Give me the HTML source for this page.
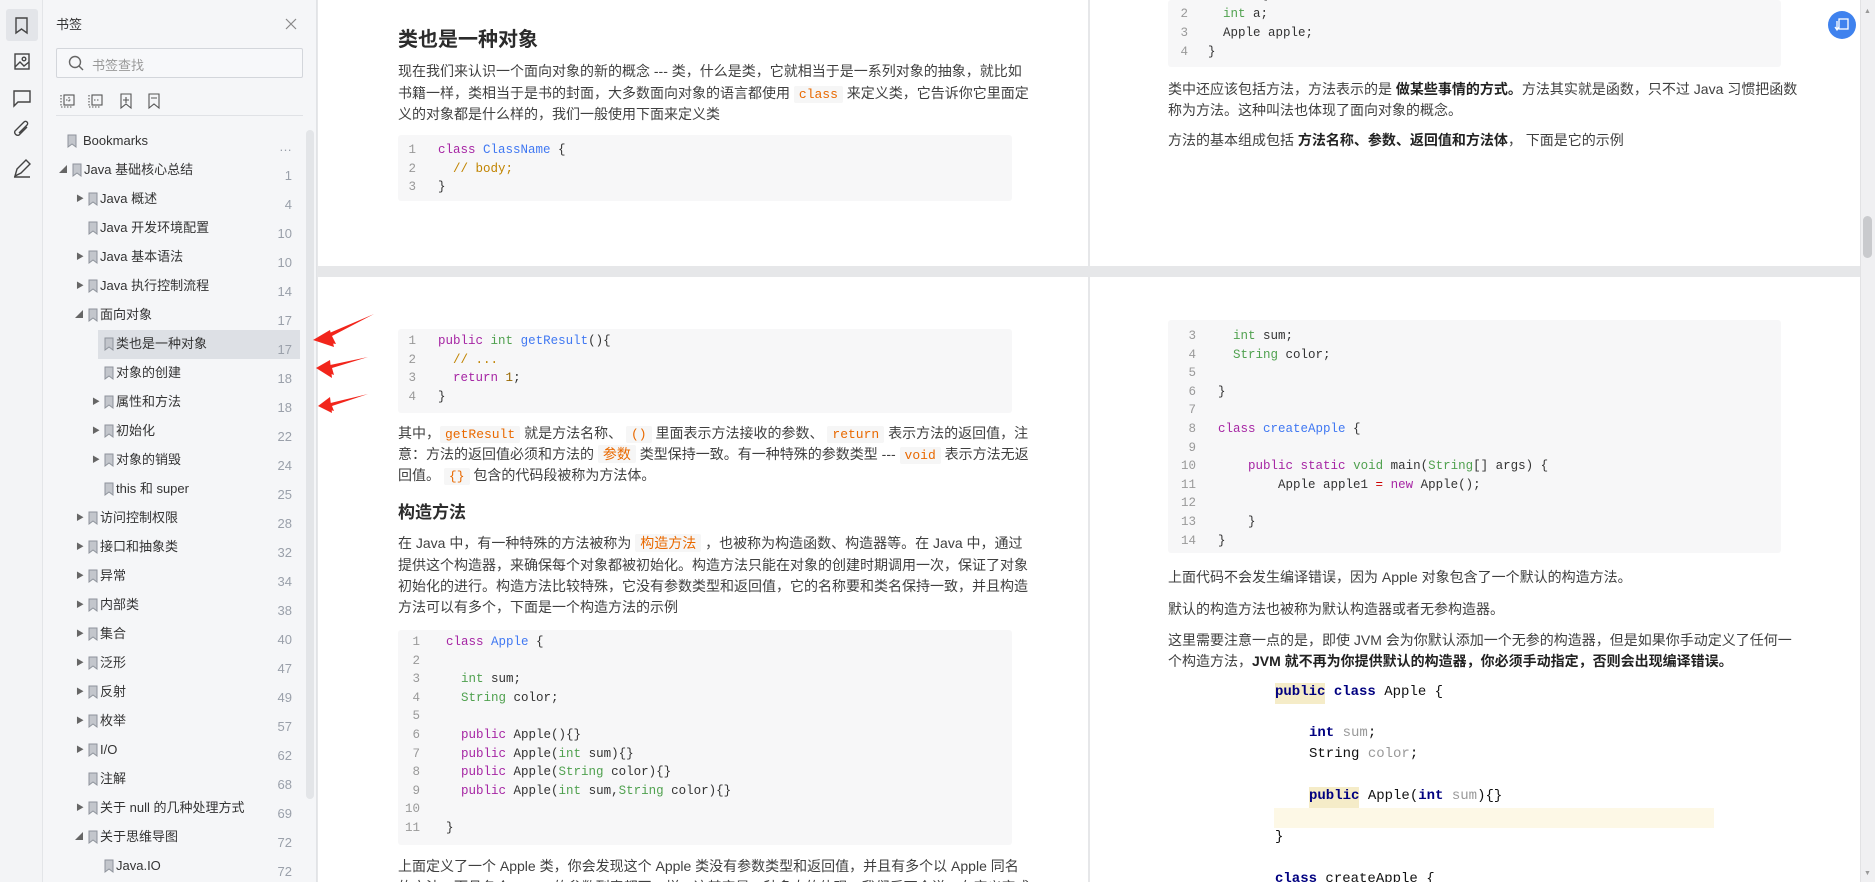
<!DOCTYPE html>
<html style="overflow:hidden"><head><meta charset="utf-8">
<style>
*{margin:0;padding:0;box-sizing:border-box}
html,body{overflow:hidden}
body{width:1875px;height:882px;position:relative;background:#e6e7e9;font-family:"Liberation Sans","Noto Sans CJK SC",sans-serif;color:#333}
.a{position:absolute;white-space:nowrap}
#icons{left:0;top:0;width:43px;height:882px;background:#f3f4f6;border-right:1px solid #e3e5e8}
#panel{left:43px;top:0;width:274px;height:882px;background:#f5f6f8;border-right:1px solid #e1e3e6}
.row{position:absolute;font-size:13px;color:#333;height:29px;line-height:24px}
.num{position:absolute;left:250px;width:42px;text-align:right;font-size:13px;color:#9aa0aa}
.tri{position:absolute;font-size:8px;color:#666}
.bm{position:absolute}
.page{position:absolute;background:#fff}
.p{position:absolute;font-size:14px;color:#3f3f3f;line-height:21px;white-space:nowrap}
.code{position:absolute;background:#f7f7f8;border-radius:3px}
.cl{position:absolute;font-family:"Liberation Mono",monospace;font-size:12.5px;white-space:pre;color:#333}
.ln{position:absolute;font-family:"Liberation Mono",monospace;font-size:12.5px;color:#999;text-align:right;width:16px}
.k{color:#a626a4}.t{color:#50a14f}.f{color:#4078f2}.c{color:#c18401}.n{color:#986801}
.ic{background:#f6f6f6;color:#e96900;font-family:"Liberation Mono",monospace;font-size:13px;padding:1px 5px;border-radius:2px}
.ict{background:#f6f6f6;color:#e96900;padding:1px 5px;border-radius:2px}
b{color:#222}
.ij{position:absolute;font-family:"Liberation Mono",monospace;font-size:14px;white-space:pre;color:#111}
.ij .kw{color:#000080;font-weight:bold}.ij .g{color:#999;}
</style></head><body>

<div class="a" id="icons"></div>
<div class="a" style="left:6px;top:9px;width:32px;height:32px;background:#e3e5e9;border-radius:3px"></div>
<svg class="a" style="left:0;top:0" width="43" height="190" fill="none" stroke="#444" stroke-width="1.4">
<path d="M16 18h11v15l-5.5-4-5.5 4z"/>
<rect x="15" y="54" width="14" height="15"/><circle cx="24" cy="59" r="1.8"/><path d="M15 67l5-5 4 4 5-4"/>
<path d="M14 91h16v11h-12l-4 4z"/>
<path d="M27 127l-8 8a3 3 0 0 1-4-4l9-9a2 2 0 0 1 3 3l-8 8"/>
<path d="M15 176l2-7 9-9 4 4-9 9z M14 177h16"/>
</svg>

<div class="a" id="panel"></div>
<div class="a" style="left:56px;top:14px;font-size:13px;color:#333">书签</div>
<svg class="a" style="left:285px;top:18px" width="12" height="12" stroke="#888" stroke-width="1.2"><path d="M1 1l10 10M11 1L1 11"/></svg>
<div class="a" style="left:56px;top:48px;width:247px;height:30px;border:1px solid #d3d6db;background:#f7f8fa;border-radius:2px"></div>
<svg class="a" style="left:68px;top:55px" width="16" height="16" fill="none" stroke="#666" stroke-width="1.4"><circle cx="7" cy="7" r="5.5"/><path d="M11 11l4 4"/></svg>
<div class="a" style="left:92px;top:55px;font-size:13px;color:#999">书签查找</div>
<svg class="a" style="left:60px;top:92px" width="110" height="18" fill="none" stroke="#555" stroke-width="1.1">
<rect x="4" y="3" width="10" height="10"/><path d="M9 5v6M6 8h6M1 3v12h12" stroke-dasharray="1.5 1.5"/>
<rect x="32" y="3" width="10" height="10"/><path d="M34 8h6M29 3v12h12" stroke-dasharray="1.5 1.5"/>
<path d="M61 2h10v14l-5-4-5 4z M66 5v6M63 8h6"/>
<path d="M89 2h10v14l-5-4-5 4z M91 6h6"/>
</svg>
<div class="a" style="left:56px;top:115px;width:247px;height:1px;background:#e0e2e6"></div>
<div class="a" style="left:306px;top:130px;width:8px;height:669px;background:#e3e5e8;border-radius:4px"></div>
<div class="a" style="left:98px;top:330px;width:202px;height:29px;background:#dde0e5"></div>

<div id="tree"></div>
<script>
var rows=[
[0,0,"Bookmarks","…",141],
[1,1,"Java 基础核心总结","1",170],
[2,2,"Java 概述","4",199],
[2,0,"Java 开发环境配置","10",228],
[2,2,"Java 基本语法","10",257],
[2,2,"Java 执行控制流程","14",286],
[2,1,"面向对象","17",315],
[3,0,"类也是一种对象","17",344],
[3,0,"对象的创建","18",373],
[3,2,"属性和方法","18",402],
[3,2,"初始化","22",431],
[3,2,"对象的销毁","24",460],
[3,0,"this 和 super","25",489],
[2,2,"访问控制权限","28",518],
[2,2,"接口和抽象类","32",547],
[2,2,"异常","34",576],
[2,2,"内部类","38",605],
[2,2,"集合","40",634],
[2,2,"泛形","47",663],
[2,2,"反射","49",692],
[2,2,"枚举","57",721],
[2,2,"I/O","62",750],
[2,0,"注解","68",779],
[2,2,"关于 null 的几种处理方式","69",808],
[2,1,"关于思维导图","72",837],
[3,0,"Java.IO","72",866]];
var h="";
rows.forEach(function(r){
 var lv=r[0],x=[0,56,72,88,104][lv];var y=r[4];
 var tx=x+3,ix=x+16,txt=x+28;
 if(lv==0){ix=67;txt=83;}
 if(r[1]==1)h+='<div class="tri" style="left:'+(tx)+'px;top:'+(y-6)+'px">◢</div>';
 if(r[1]==2)h+='<div class="tri" style="left:'+(tx+1)+'px;top:'+(y-6)+'px">▶</div>';
 h+='<svg class="bm" style="left:'+ix+'px;top:'+(y-7)+'px" width="10" height="14"><path d="M1 1h8v12l-4-3-4 3z" fill="#c3c6cc" stroke="#8e939b" stroke-width="1"/></svg>';
 h+='<div class="row" style="left:'+txt+'px;top:'+(y-12)+'px">'+r[2]+'</div>';
 h+='<div class="num" style="top:'+(y-2)+'px">'+r[3]+'</div>';
});
document.getElementById("tree").innerHTML=h;
</script>

<div class="page" style="left:318px;top:0;width:770px;height:266px"></div>
<div class="page" style="left:1090px;top:0;width:770px;height:266px"></div>
<div class="page" style="left:318px;top:277px;width:770px;height:605px"></div>
<div class="page" style="left:1090px;top:277px;width:770px;height:605px"></div>

<div class="a" style="left:398px;top:23px;font-size:20px;font-weight:bold;color:#2c2c2c">类也是一种对象</div>
<div class="p" style="left:398px;top:61px">现在我们来认识一个面向对象的新的概念 --- 类，什么是类，它就相当于是一系列对象的抽象，就比如</div>
<div class="p" style="left:398px;top:83px">书籍一样，类相当于是书的封面，大多数面向对象的语言都使用 <span class="ic">class</span> 来定义类，它告诉你它里面定</div>
<div class="p" style="left:398px;top:104px">义的对象都是什么样的，我们一般使用下面来定义类</div>
<div class="code" style="left:398px;top:135px;width:614px;height:66px"></div>
<div class="ln" style="left:400px;top:141px;line-height:18.5px">1<br>2<br>3</div>
<div class="cl" style="left:438px;top:141px;line-height:18.5px"><span class="k">class</span> <span class="f">ClassName</span> {
  <span class="c">// body;</span>
}</div>

<div class="code" style="left:398px;top:329px;width:614px;height:84px"></div>
<div class="ln" style="left:400px;top:332px;line-height:18.7px">1<br>2<br>3<br>4</div>
<div class="cl" style="left:438px;top:332px;line-height:18.7px"><span class="k">public</span> <span class="t">int</span> <span class="f">getResult</span>(){
  <span class="c">// ...</span>
  <span class="k">return</span> <span class="n">1</span>;
}</div>
<div class="p" style="left:398px;top:423px">其中，<span class="ic">getResult</span> 就是方法名称、 <span class="ic">()</span> 里面表示方法接收的参数、 <span class="ic">return</span> 表示方法的返回值，注</div>
<div class="p" style="left:398px;top:444px">意：方法的返回值必须和方法的 <span class="ict">参数</span> 类型保持一致。有一种特殊的参数类型 --- <span class="ic">void</span> 表示方法无返</div>
<div class="p" style="left:398px;top:465px">回值。 <span class="ic">{}</span> 包含的代码段被称为方法体。</div>
<div class="a" style="left:398px;top:498px;font-size:17px;font-weight:bold;color:#2c2c2c">构造方法</div>
<div class="p" style="left:398px;top:533px">在 Java 中，有一种特殊的方法被称为 <span class="ict">构造方法</span> ，也被称为构造函数、构造器等。在 Java 中，通过</div>
<div class="p" style="left:398px;top:555px">提供这个构造器，来确保每个对象都被初始化。构造方法只能在对象的创建时期调用一次，保证了对象</div>
<div class="p" style="left:398px;top:576px">初始化的进行。构造方法比较特殊，它没有参数类型和返回值，它的名称要和类名保持一致，并且构造</div>
<div class="p" style="left:398px;top:597px">方法可以有多个，下面是一个构造方法的示例</div>
<div class="code" style="left:398px;top:630px;width:614px;height:215px"></div>
<div class="ln" style="left:404px;top:633px;line-height:18.6px">1<br>2<br>3<br>4<br>5<br>6<br>7<br>8<br>9<br>10<br>11</div>
<div class="cl" style="left:446px;top:633px;line-height:18.6px"><span class="k">class</span> <span class="f">Apple</span> {

  <span class="t">int</span> sum;
  <span class="t">String</span> color;

  <span class="k">public</span> Apple(){}
  <span class="k">public</span> Apple(<span class="t">int</span> sum){}
  <span class="k">public</span> Apple(<span class="t">String</span> color){}
  <span class="k">public</span> Apple(<span class="t">int</span> sum,<span class="t">String</span> color){}

}</div>
<div class="p" style="left:398px;top:856px">上面定义了一个 Apple 类，你会发现这个 Apple 类没有参数类型和返回值，并且有多个以 Apple 同名</div>
<div class="p" style="left:398px;top:877px">的方法，而且各个 Apple 的参数列表都不一样，这其实是一种多态的体现，我们后面会说，在定义完成</div>

<div class="code" style="left:1168px;top:0;width:613px;height:67px"></div>
<div class="ln" style="left:1172px;top:-14px;line-height:19px">1<br>2<br>3<br>4</div>
<div class="cl" style="left:1208px;top:-14px;line-height:19px"><span class="k">class</span> A{
  <span class="t">int</span> a;
  Apple apple;
}</div>
<div class="p" style="left:1168px;top:79px">类中还应该包括方法，方法表示的是 <b>做某些事情的方式。</b>方法其实就是函数，只不过 Java 习惯把函数</div>
<div class="p" style="left:1168px;top:100px">称为方法。这种叫法也体现了面向对象的概念。</div>
<div class="p" style="left:1168px;top:130px">方法的基本组成包括 <b>方法名称、参数、返回值和方法体</b>， 下面是它的示例</div>

<div class="code" style="left:1168px;top:320px;width:613px;height:233px"></div>
<div class="ln" style="left:1180px;top:327px;line-height:18.6px">3<br>4<br>5<br>6<br>7<br>8<br>9<br>10<br>11<br>12<br>13<br>14</div>
<div class="cl" style="left:1218px;top:327px;line-height:18.6px">  <span class="t">int</span> sum;
  <span class="t">String</span> color;

}

<span class="k">class</span> <span class="f">createApple</span> {

    <span class="k">public</span> <span class="k">static</span> <span class="t">void</span> main(<span class="t">String</span>[] args) {
        Apple apple1 <span style="color:#c00">=</span> <span class="k">new</span> Apple();

    }
}</div>
<div class="p" style="left:1168px;top:567px">上面代码不会发生编译错误，因为 Apple 对象包含了一个默认的构造方法。</div>
<div class="p" style="left:1168px;top:599px">默认的构造方法也被称为默认构造器或者无参构造器。</div>
<div class="p" style="left:1168px;top:630px">这里需要注意一点的是，即使 JVM 会为你默认添加一个无参的构造器，但是如果你手动定义了任何一</div>
<div class="p" style="left:1168px;top:651px">个构造方法，<b>JVM 就不再为你提供默认的构造器，你必须手动指定，否则会出现编译错误。</b></div>
<div class="a" style="left:1274px;top:808px;width:440px;height:20px;background:#fdf8e6"></div>
<div class="a" style="left:1275px;top:683px;width:50px;height:21px;background:#f5ecc8"></div>
<div class="a" style="left:1309px;top:787px;width:50px;height:21px;background:#f5ecc8"></div>
<div class="ij" style="left:1275px;top:684px"><span class="kw">public</span> <span class="kw">class</span> Apple {</div>
<div class="ij" style="left:1309px;top:725px"><span class="kw">int</span> <span class="g">sum</span>;</div>
<div class="ij" style="left:1309px;top:746px">String <span class="g">color</span>;</div>
<div class="ij" style="left:1309px;top:788px"><span class="kw">public</span> Apple(<span class="kw">int</span> <span class="g">sum</span>){}</div>
<div class="ij" style="left:1275px;top:829px">}</div>
<div class="ij" style="left:1275px;top:871px"><span class="kw">class</span> createApple {</div>

<div class="a" style="left:1828px;top:11px;width:28px;height:28px;border-radius:50%;background:#3f82ee"></div>
<svg class="a" style="left:1833px;top:16px" width="18" height="18" fill="none" stroke="#fff" stroke-width="1.3"><rect x="6" y="3" width="9" height="10"/><path d="M4 5v8M2 11l2 3 2-3"/></svg>

<div class="a" style="left:1860px;top:0;width:15px;height:882px;background:#f0f0f2;border-left:1px solid #e2e2e4"></div>
<div class="a" style="left:1864px;top:8px;font-size:7px;color:#999">▲</div>
<div class="a" style="left:1864px;top:870px;font-size:7px;color:#999">▼</div>
<div class="a" style="left:1863px;top:216px;width:9px;height:42px;background:#c9cacd;border-radius:5px"></div>

<svg class="a" style="left:310px;top:310px" width="70" height="110">
<path d="M3 30 L 64 4 L 22 26 L 26 34 Z M3 30 L20 20 L24 37Z" fill="#f2251b"/>
<path d="M6 58 L 58 47 L 22 58 L 24 65 Z M6 58 L20 50 L22 68Z" fill="#f2251b"/>
<path d="M8 96 L 58 84 L 22 96 L 24 101 Z M8 96 L20 87 L22 103Z" fill="#f2251b"/>
</svg>
</body></html>
